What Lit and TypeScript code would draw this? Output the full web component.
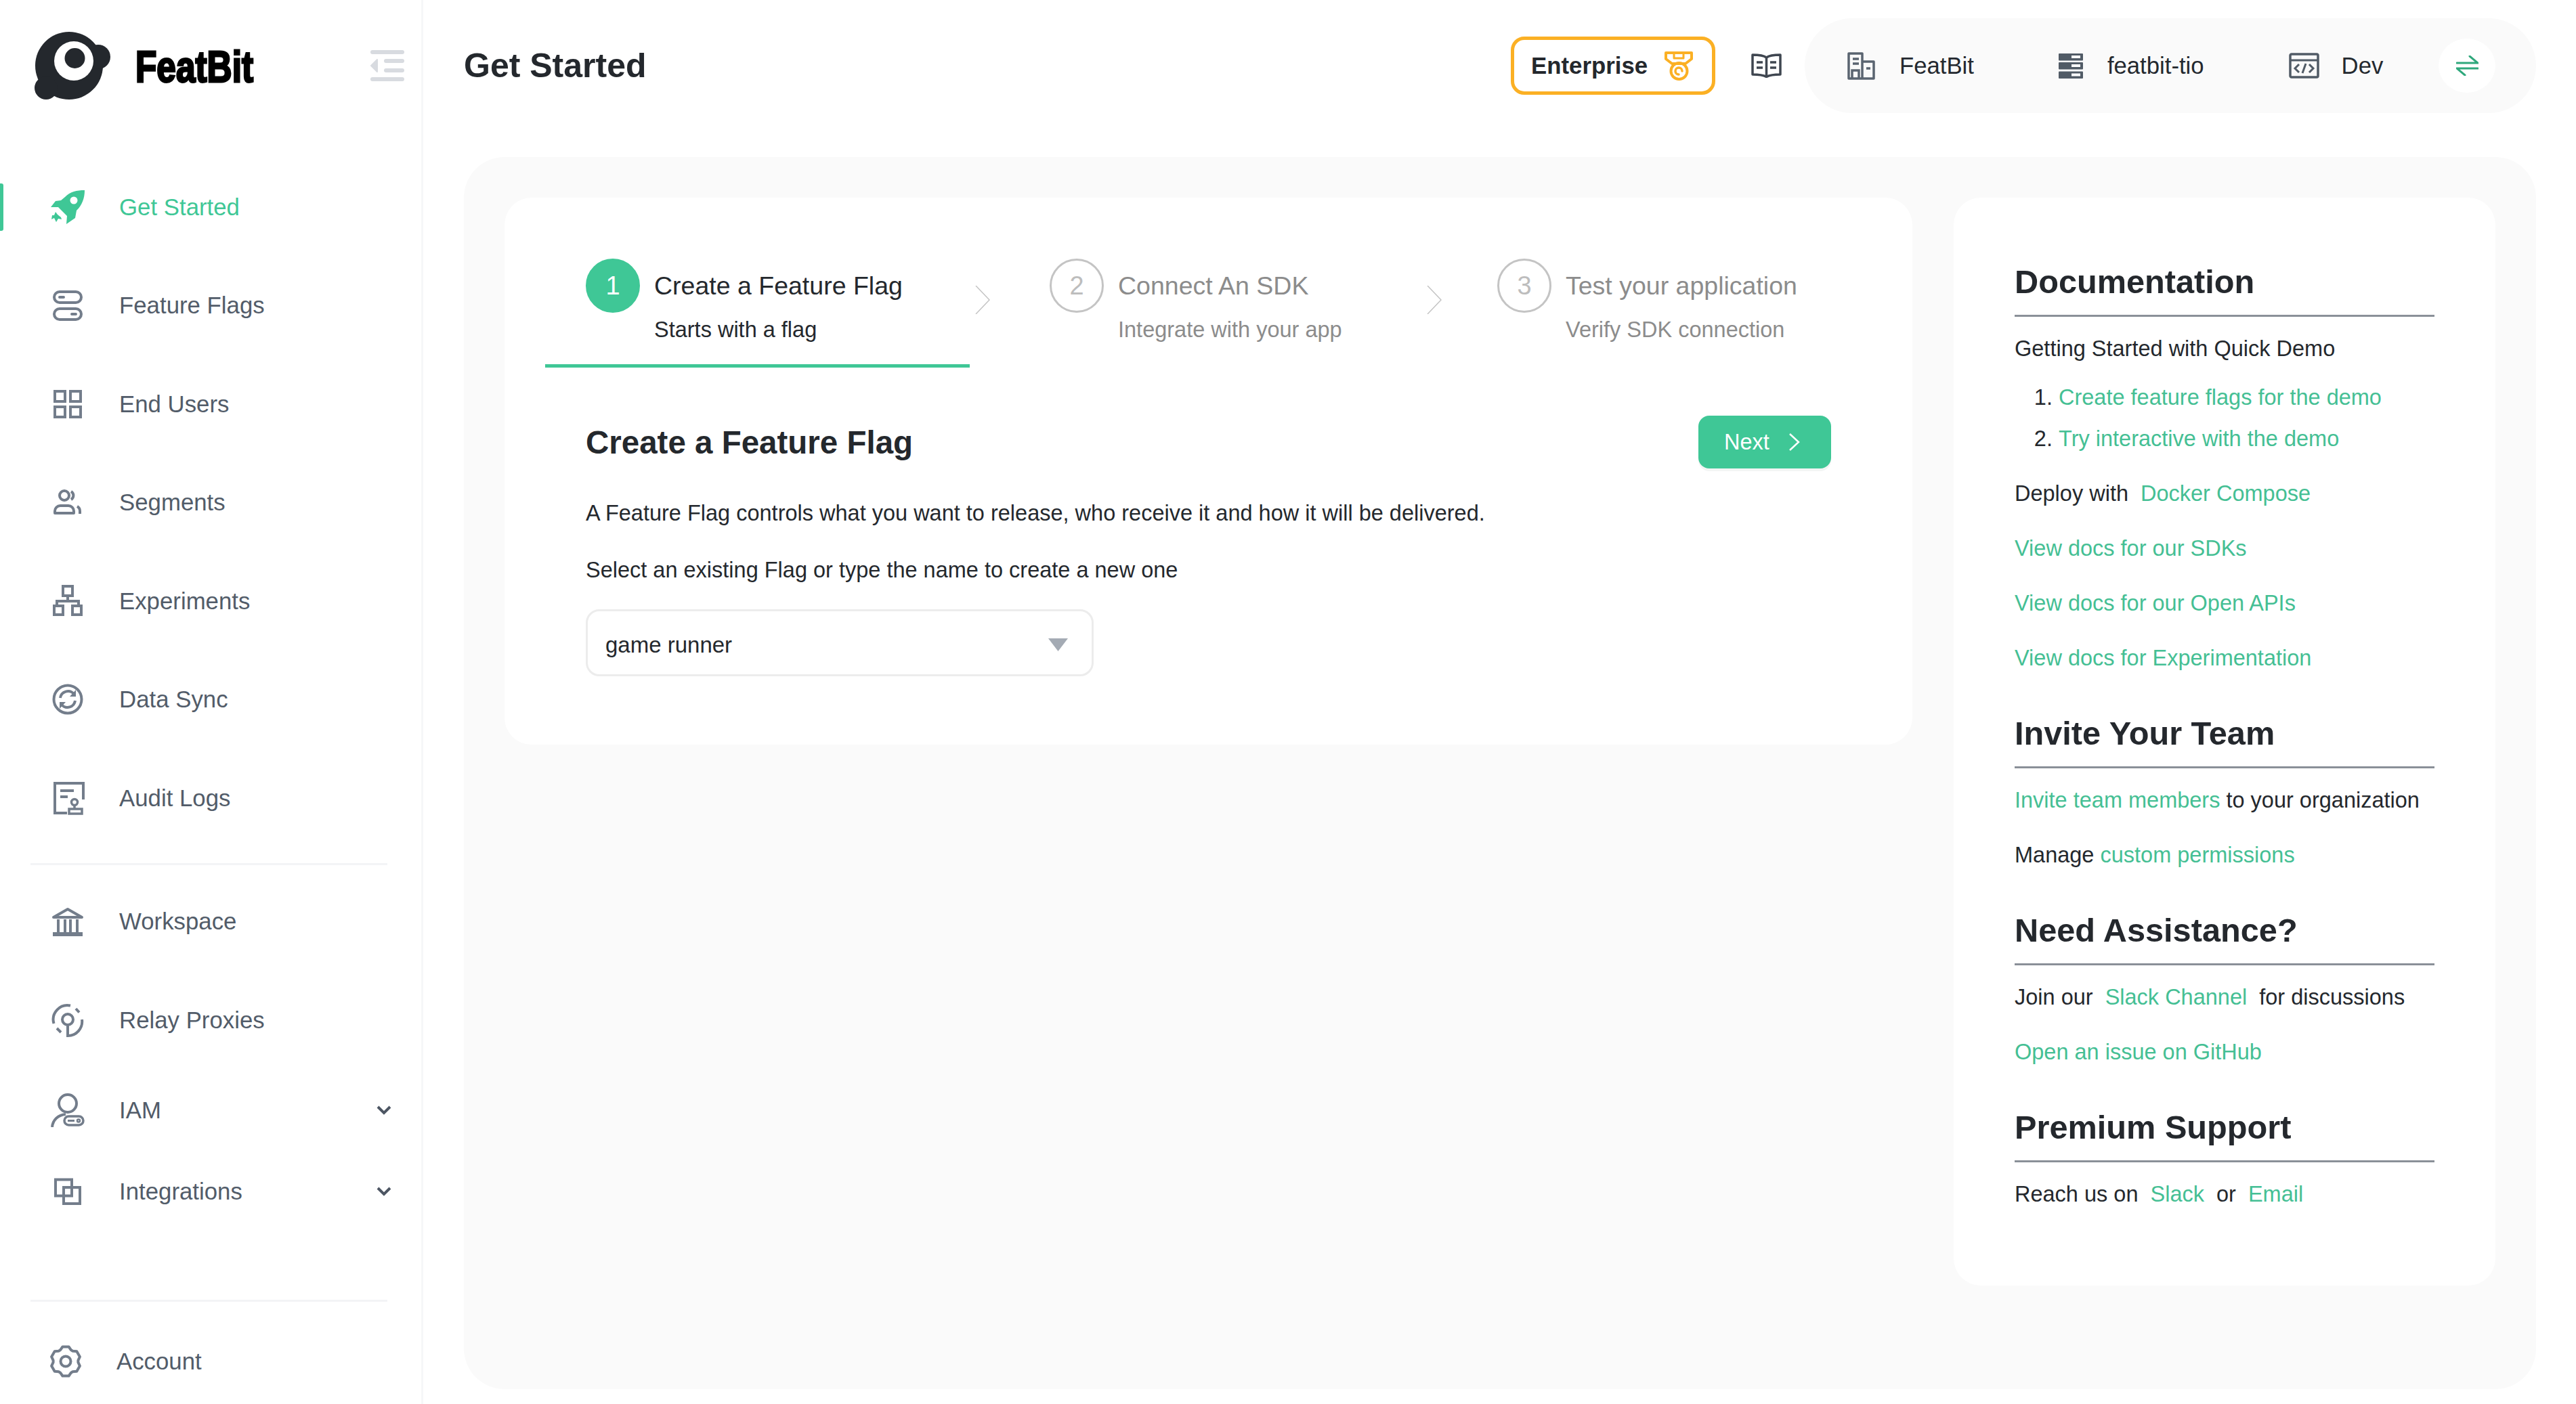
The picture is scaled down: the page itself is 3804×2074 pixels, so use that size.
import { LitElement, css, html, svg } from "lit";
import { customElement } from "lit/decorators.js";
import { classMap } from "lit/directives/class-map.js";

// nav icons share one 50x50 box
const navIcon = (body: unknown) =>
  html`<svg class="nav-icon" viewBox="0 0 50 50" fill="none" stroke="currentColor" stroke-width="4">${body}</svg>`;

const gearPath = () => {
  // six lobed gear outline
  const pts: string[] = [];
  for (let i = 0; i < 6; i++) {
    const a = (Math.PI / 3) * i - Math.PI / 2;
    const d = 0.3;
    const p = (r: number, t: number) =>
      `${(25 + r * Math.cos(t)).toFixed(1)} ${(25 + r * Math.sin(t)).toFixed(1)}`;
    pts.push(p(18.5, a - d * 1.5), p(22, a - d * 0.7), p(22, a + d * 0.7), p(18.5, a + d * 1.5));
  }
  return `M${pts.join(" L")} Z`;
};

const icons = {
  rocket: html`<svg class="nav-icon" viewBox="0 0 50 50">
    <path fill="currentColor" d="M50 0C38 0 29 2 21 10L15 15 7 16 0 25 11 25 24 38 23 50 36 41 38 30C46 22 50 12 50 0Z" />
    <circle cx="34" cy="15" r="5.5" fill="#fff" />
    <path fill="currentColor" d="M7 32 10 36 15 40 16 43 11 42 8 47 5 41 1 43 2 37 5 37Z" />
  </svg>`,
  flags: navIcon(svg`
    <rect x="5" y="5" width="40" height="16" rx="8" />
    <rect x="5" y="30" width="40" height="16" rx="8" />
    <path stroke-linecap="round" d="M13 13h6M31 38h6" />`),
  users: navIcon(svg`
    <rect x="6" y="6" width="15" height="15" />
    <rect x="29" y="6" width="15" height="15" />
    <rect x="6" y="29" width="15" height="15" />
    <rect x="29" y="29" width="15" height="15" />`),
  segments: navIcon(svg`
    <circle cx="20" cy="15" r="7" />
    <path stroke-linejoin="round" d="M6 41v-3a8 8 0 0 1 8-8h12a8 8 0 0 1 8 8v3z" />
    <path d="M30 9a7 7 0 0 1 0 12M43 42v-4a8 8 0 0 0-4-7" />`),
  experiments: navIcon(svg`
    <rect x="18" y="3" width="14" height="14" />
    <path d="M25 17v8M9 32v-7h32v7" />
    <rect x="5" y="32" width="13" height="13" />
    <rect x="32" y="32" width="13" height="13" />`),
  sync: navIcon(svg`
    <circle cx="25" cy="25" r="20.5" />
    <path d="M14 23a11.5 11.5 0 0 1 20-6M36 27a11.5 11.5 0 0 1-20 6" />
    <path fill="currentColor" stroke="none" d="M37 11v10h-9zM13 39V29h9z" />`),
  audit: navIcon(svg`
    <path d="M24 47H6V3h42v24" />
    <path d="M14 14h20M14 23h11" />
    <circle cx="35" cy="31" r="4.5" stroke-width="3.5" />
    <path stroke-width="3.5" d="M35 35v5" />
    <rect x="27" y="41" width="19" height="7" stroke-width="3.5" />`),
  workspace: navIcon(svg`
    <path stroke-linejoin="round" d="M4 19 25 7l21 12z" />
    <path d="M11 22v20M21 22v20M29 22v20M39 22v20" />
    <path stroke-width="6" d="M3 44h44" />`),
  relay: navIcon(svg`
    <circle cx="25" cy="24" r="8" />
    <path d="M25 32v16a21 21 0 0 0 21-24M4.500 30A21 21 0 0 1 29 3.500M37 8l5 5.500M9 37l6 6" />`),
  iam: navIcon(svg`
    <circle cx="25" cy="15" r="13" />
    <path d="M2 50c1-11 9-18 20-19" />
    <rect x="20" y="34" width="28" height="13" rx="6.500" stroke-width="3.500" />
    <circle cx="41" cy="40.500" r="2" stroke-width="2.500" />
    <path stroke-width="3" d="M25 40.500h10" />`),
  integrations: navIcon(svg`
    <rect x="7" y="7.500" width="24" height="24" />
    <rect x="19" y="19" width="24" height="24" />`),
  gear: navIcon(svg`
    <path stroke-linejoin="round" d=${gearPath()} />
    <circle cx="25" cy="25" r="7.500" />`),
};

const navMain = [
  { label: "Get Started", icon: icons.rocket, active: true },
  { label: "Feature Flags", icon: icons.flags },
  { label: "End Users", icon: icons.users },
  { label: "Segments", icon: icons.segments },
  { label: "Experiments", icon: icons.experiments },
  { label: "Data Sync", icon: icons.sync },
  { label: "Audit Logs", icon: icons.audit },
];

const steps = [
  { n: 1, title: "Create a Feature Flag", sub: "Starts with a flag", active: true },
  { n: 2, title: "Connect An SDK", sub: "Integrate with your app" },
  { n: 3, title: "Test your application", sub: "Verify SDK connection" },
];

const chevron = html`<svg class="step-chev" viewBox="0 0 22 42" fill="none" stroke="#c4c4c4" stroke-width="1.500">
  <path d="M1 0 21 21 1 42" />
</svg>`;

@customElement("app-root")
export class AppRoot extends LitElement {
  static styles = css`
    :host {
      display: block;
      width: 3804px;
      height: 2074px;
      overflow: hidden;
      background: #fff;
      font-family: "Liberation Sans", Arial, sans-serif;
      color: #24282d;
    }

    a {
      color: #45bf94;
      text-decoration: none;
    }

    .page {
      display: flex;
      height: 100%;
    }

    /* sidebar */
    .sidebar {
      box-sizing: border-box;
      width: 625px;
      height: 100%;
      flex: none;
      display: flex;
      flex-direction: column;
      border-right: 3px solid #f6f7f8;
      color: #525c69;
    }

    .brand {
      height: 233px;
      flex: none;
      box-sizing: border-box;
      padding: 47px 25px 0 50px;
      display: flex;
      align-items: flex-start;
    }

    .logo {
      width: 113px;
      height: 100px;
      flex: none;
    }

    .brand-name {
      margin-left: 37px;
      margin-top: 20px;
      font-size: 65px;
      line-height: 64px;
      font-weight: 700;
      color: #000;
      -webkit-text-stroke: 3px #000;
      transform: scaleX(0.79);
      transform-origin: left center;
    }

    .collapse {
      width: 50px;
      height: 46px;
      margin-left: auto;
      margin-top: 27px;
      flex: none;
    }

    .nav-item {
      position: relative;
      height: 145.500px;
      box-sizing: border-box;
      display: flex;
      align-items: center;
      padding-left: 75px;
      gap: 51px;
      font-size: 34.800px;
      flex: none;
    }

    .nav-item.short {
      height: 120px;
    }

    .nav-item.active {
      color: #3fc796;
    }

    .nav-item.active::before {
      content: "";
      position: absolute;
      left: 0;
      top: 38px;
      width: 5px;
      height: 70px;
      background: #3fc796;
      border-radius: 0 3px 3px 0;
    }

    .nav-item.account {
      height: 120px;
      padding-left: 72px;
      gap: 50px;
    }

    .nav-icon {
      width: 50px;
      height: 50px;
      flex: none;
      color: #737d8b;
    }

    .active .nav-icon {
      color: #3fc796;
    }

    .caret {
      width: 22px;
      height: 14px;
      margin-left: auto;
      margin-right: 44px;
      flex: none;
    }

    .nav-divider {
      height: 3px;
      margin: 23px 50px 11px 45px;
      background: #f3f4f6;
      flex: none;
    }

    .nav-bottom {
      margin-top: auto;
      padding-bottom: 3px;
    }

    .nav-bottom .nav-divider {
      margin: 0 50px 28px 45px;
    }

    /* main column */
    .main {
      flex: 1;
      min-width: 0;
      padding: 0 59px 22px 60px;
      display: flex;
      flex-direction: column;
    }

    .topbar {
      height: 194px;
      margin-bottom: 38px;
      display: flex;
      align-items: center;
      flex: none;
    }

    .page-title {
      margin: 0;
      font-size: 50px;
      font-weight: 700;
      color: #24282d;
    }

    .enterprise {
      margin-left: auto;
      box-sizing: border-box;
      width: 302px;
      height: 86px;
      border: 5px solid #fbb024;
      border-radius: 20px;
      display: flex;
      align-items: center;
      padding-left: 25px;
      gap: 25px;
      font-size: 34.800px;
      font-weight: 700;
    }

    .medal {
      width: 42px;
      height: 43px;
      flex: none;
    }

    .book {
      width: 45px;
      height: 36px;
      margin: 0 34px 0 53px;
      flex: none;
    }

    .context {
      box-sizing: border-box;
      width: 1080px;
      height: 140px;
      flex: none;
      border-radius: 70px;
      background: #fafafa;
      display: flex;
      align-items: center;
      justify-content: space-between;
      padding: 0 60px 0 63px;
      font-size: 34.700px;
      color: #24292f;
      white-space: nowrap;
    }

    .context-items {
      display: flex;
      align-items: center;
      gap: 125px;
    }

    .context-item {
      display: flex;
      align-items: center;
      gap: 36px;
      flex: none;
    }

    .context-item:last-child {
      gap: 33px;
    }

    .context-item svg {
      flex: none;
    }

    .swap {
      width: 84px;
      height: 80px;
      border-radius: 50%;
      background: #fff;
      display: flex;
      align-items: center;
      justify-content: center;
      flex: none;
    }

    .swap svg {
      width: 33px;
      height: 30px;
    }

    .panel {
      flex: 1;
      min-height: 0;
      background: #fafafa;
      border-radius: 60px;
      padding: 60px;
      display: flex;
      align-items: flex-start;
      gap: 61px;
    }

    .card {
      background: #fff;
      border-radius: 40px;
      box-sizing: border-box;
    }

    /* stepper card */
    .wizard {
      flex: 1;
      min-width: 0;
      padding: 90px 120px 101px 60px;
    }

    .steps {
      display: flex;
      align-items: flex-start;
    }

    .step {
      box-sizing: border-box;
      height: 161px;
      padding-left: 60px;
      color: #8c8c8c;
      width: 609px;
      flex: none;
    }

    .step:nth-of-type(1) {
      width: 627px;
    }

    .step:nth-of-type(2) {
      margin-left: 6px;
    }

    .step:nth-of-type(3) {
      width: auto;
      white-space: nowrap;
    }

    .step.active {
      color: #24282d;
      border-bottom: 5px solid #3fc796;
    }

    .step-head {
      display: flex;
      align-items: center;
      gap: 21px;
      height: 80px;
      font-size: 37.500px;
    }

    .step-num {
      box-sizing: border-box;
      width: 80px;
      height: 80px;
      border-radius: 50%;
      border: 3px solid #c4c4c4;
      color: #bdbdbd;
      display: flex;
      align-items: center;
      justify-content: center;
      flex: none;
      font-size: 38px;
    }

    .active .step-num {
      background: #3fc796;
      border-color: #3fc796;
      color: #fff;
    }

    .step-sub {
      margin-left: 101px;
      font-size: 32.500px;
      line-height: 50px;
    }

    .step-chev {
      width: 22px;
      height: 42px;
      margin: 40px 22px 0 8px;
      flex: none;
    }

    .wizard-body {
      padding-left: 60px;
      margin-top: 71px;
    }

    .wizard-head {
      display: flex;
      align-items: center;
      justify-content: space-between;
      height: 78px;
    }

    .wizard-head h2 {
      margin: 0;
      font-size: 47.500px;
      font-weight: 700;
    }

    .next {
      width: 196px;
      height: 78px;
      border: 0;
      border-radius: 16px;
      background: #3fc796;
      color: #fff;
      font: inherit;
      font-size: 32.500px;
      display: flex;
      align-items: center;
      gap: 28px;
      padding: 0 0 0 38px;
      box-shadow: 0 4px 0 #f3f5f4;
    }

    .next svg {
      width: 17px;
      height: 26px;
    }

    .wizard-body p {
      margin: 0;
      font-size: 32.500px;
      line-height: 48px;
    }

    .wizard-body p.lead {
      margin-top: 42px;
    }

    .wizard-body p.ask {
      margin-top: 36px;
    }

    .select {
      box-sizing: border-box;
      width: 750px;
      height: 99px;
      margin-top: 34px;
      border: 3px solid #ececec;
      border-radius: 20px;
      display: flex;
      align-items: center;
      justify-content: space-between;
      padding: 6px 35px 0 26px;
      font-size: 33px;
    }

    .select svg {
      width: 29px;
      height: 19px;
    }

    /* docs card */
    .docs {
      width: 800px;
      height: 1607px;
      flex: none;
      padding: 94px 90px 0 90px;
      font-size: 32.500px;
      line-height: 48px;
    }

    .docs h3 {
      margin: 0 0 23px;
      height: 60px;
      padding-bottom: 19px;
      border-bottom: 3px solid #8a9098;
      font-size: 48.700px;
      line-height: 60px;
      font-weight: 700;
      box-sizing: content-box;
    }

    .docs section + section {
      margin-top: 57px;
    }

    .docs p {
      margin: 0 0 33px;
    }

    .docs section p:last-child {
      margin-bottom: 0;
    }

    .docs ol {
      margin: -9px 0 33px;
      padding: 0 0 0 65px;
    }

    .docs li {
      margin-bottom: 13px;
    }

    .docs li:last-child {
      margin-bottom: 0;
    }

    .sp {
      margin: 0 18px;
    }
  `;

  private renderNavItem(item: { label: string; icon: unknown; active?: boolean }) {
    return html`<div class=${classMap({ "nav-item": true, active: !!item.active })}>
      ${item.icon}<span>${item.label}</span>
    </div>`;
  }

  private renderExpandable(label: string, icon: unknown) {
    return html`<div class="nav-item short">
      ${icon}<span>${label}</span>
      <svg class="caret" viewBox="0 0 22 14" fill="none" stroke="#4d5663" stroke-width="4">
        <path d="M2 2l9 9 9-9" />
      </svg>
    </div>`;
  }

  private renderSidebar() {
    return html`<aside class="sidebar">
      <div class="brand">
        <svg class="logo" viewBox="0 0 113 100" fill="#24282d">
          <circle cx="52" cy="50" r="50" />
          <circle cx="95" cy="37" r="18" />
          <circle cx="18" cy="83" r="17" />
          <circle cx="59" cy="43" r="29" fill="#fff" />
          <circle cx="60.500" cy="39" r="15" />
        </svg>
        <span class="brand-name">FeatBit</span>
        <svg class="collapse" viewBox="0 0 50 46" fill="#d8dbe0">
          <rect width="50" height="6" rx="3" />
          <rect x="20" y="13" width="30" height="6" rx="3" />
          <rect x="20" y="27" width="30" height="6" rx="3" />
          <rect y="40" width="50" height="6" rx="3" />
          <path d="M10 14v18L1 23z" stroke="#d8dbe0" stroke-width="2" stroke-linejoin="round" />
        </svg>
      </div>
      ${navMain.map((item) => this.renderNavItem(item))}
      <div class="nav-divider"></div>
      ${this.renderNavItem({ label: "Workspace", icon: icons.workspace })}
      ${this.renderNavItem({ label: "Relay Proxies", icon: icons.relay })}
      ${this.renderExpandable("IAM", icons.iam)}
      ${this.renderExpandable("Integrations", icons.integrations)}
      <div class="nav-bottom">
        <div class="nav-divider"></div>
        <div class="nav-item account">${icons.gear}<span>Account</span></div>
      </div>
    </aside>`;
  }

  private renderTopbar() {
    return html`<header class="topbar">
      <h1 class="page-title">Get Started</h1>
      <div class="enterprise">
        <span>Enterprise</span>
        <svg class="medal" viewBox="0 0 42 43" fill="none" stroke="#fbb024" stroke-width="4" stroke-linejoin="round">
          <path d="M2 2h38v9l-9 7H11l-9-7z" />
          <path stroke-width="3" d="M14 2v8h14V2" />
          <circle cx="21.500" cy="29" r="12" />
          <path stroke-linecap="round" stroke-width="3.500" d="M26 29a5 5 0 1 0-5 5" />
        </svg>
      </div>
      <svg class="book" viewBox="0 0 45 36" fill="none" stroke="#3f4650" stroke-width="3.500">
        <path stroke-linejoin="round" d="M22.500 6C18 2.500 10 2 2 2v29c8 0 15 .5 20.500 3.500C28 31.500 35 31 43 31V2c-8 0-16 .5-20.500 4zM22.500 6v28" />
        <path d="M8 13h9M8 21h9M28 13h9M28 21h9" />
      </svg>
      <div class="context">
        <div class="context-items">
          <div class="context-item">
            <svg width="41" height="41" viewBox="0 0 41 41" fill="none" stroke="#5a6470" stroke-width="3.500">
              <path d="M2 39V2h20v37zM22 14h17v25H22z" stroke-linejoin="round" />
              <path d="M8 10h9M8 17h9M28 24h6" />
              <path d="M7 39V27h10v12" />
            </svg>
            <span>FeatBit</span>
          </div>
          <div class="context-item">
            <svg width="36" height="37" viewBox="0 0 36 37" fill="#515b66">
              <rect width="36" height="10.500" rx="1" />
              <rect y="13" width="36" height="10.500" rx="1" />
              <rect y="26.500" width="36" height="10.500" rx="1" />
              <path fill="#fff" d="M19 3h13v4H19zM19 16h13v4H19zM19 29.500h13v4H19z" />
            </svg>
            <span>featbit-tio</span>
          </div>
          <div class="context-item">
            <svg width="45" height="38" viewBox="0 0 45 38" fill="none" stroke="#515b66" stroke-width="3.500">
              <rect x="2" y="2" width="41" height="34" rx="2" />
              <path d="M2 11h41" stroke-width="3" />
              <path stroke-width="3" d="M15 17l-6 6 6 6M30 17l6 6-6 6M25 16l-5 14" />
            </svg>
            <span>Dev</span>
          </div>
        </div>
        <div class="swap">
          <svg viewBox="0 0 33 30" fill="none" stroke="#2fa87c" stroke-width="3" stroke-linecap="round">
            <path d="M1 11h31L20 1M32 19H1l12 10" />
          </svg>
        </div>
      </div>
    </header>`;
  }

  private renderWizard() {
    return html`<div class="card wizard">
      <div class="steps">
        ${steps.map(
          (step, i) => html`<div class=${classMap({ step: true, active: !!step.active })}>
              <div class="step-head">
                <span class="step-num">${step.n}</span>
                <span>${step.title}</span>
              </div>
              <div class="step-sub">${step.sub}</div>
            </div>
            ${i < steps.length - 1 ? chevron : ""}`,
        )}
      </div>
      <div class="wizard-body">
        <div class="wizard-head">
          <h2>Create a Feature Flag</h2>
          <button class="next">
            <span>Next</span>
            <svg viewBox="0 0 17 26" fill="none" stroke="#fff" stroke-width="2.500"><path d="M2 1l13 12L2 25" /></svg>
          </button>
        </div>
        <p class="lead">A Feature Flag controls what you want to release, who receive it and how it will be delivered.</p>
        <p class="ask">Select an existing Flag or type the name to create a new one</p>
        <div class="select">
          <span>game runner</span>
          <svg viewBox="0 0 29 19"><path fill="#a4abb4" d="M0 0h29L14.500 19z" /></svg>
        </div>
      </div>
    </div>`;
  }

  private renderDocs() {
    return html`<div class="card docs">
      <section>
        <h3>Documentation</h3>
        <p>Getting Started with Quick Demo</p>
        <ol>
          <li><a href="#">Create feature flags for the demo</a></li>
          <li><a href="#">Try interactive with the demo</a></li>
        </ol>
        <p>Deploy with<a class="sp" href="#">Docker Compose</a></p>
        <p><a href="#">View docs for our SDKs</a></p>
        <p><a href="#">View docs for our Open APIs</a></p>
        <p><a href="#">View docs for Experimentation</a></p>
      </section>
      <section>
        <h3>Invite Your Team</h3>
        <p><a href="#">Invite team members</a> to your organization</p>
        <p>Manage <a href="#">custom permissions</a></p>
      </section>
      <section>
        <h3>Need Assistance?</h3>
        <p>Join our<a class="sp" href="#">Slack Channel</a>for discussions</p>
        <p><a href="#">Open an issue on GitHub</a></p>
      </section>
      <section>
        <h3>Premium Support</h3>
        <p>Reach us on<a class="sp" href="#">Slack</a>or<a class="sp" href="#">Email</a></p>
      </section>
    </div>`;
  }

  render() {
    return html`<div class="page">
      ${this.renderSidebar()}
      <main class="main">
        ${this.renderTopbar()}
        <div class="panel">${this.renderWizard()} ${this.renderDocs()}</div>
      </main>
    </div>`;
  }
}
